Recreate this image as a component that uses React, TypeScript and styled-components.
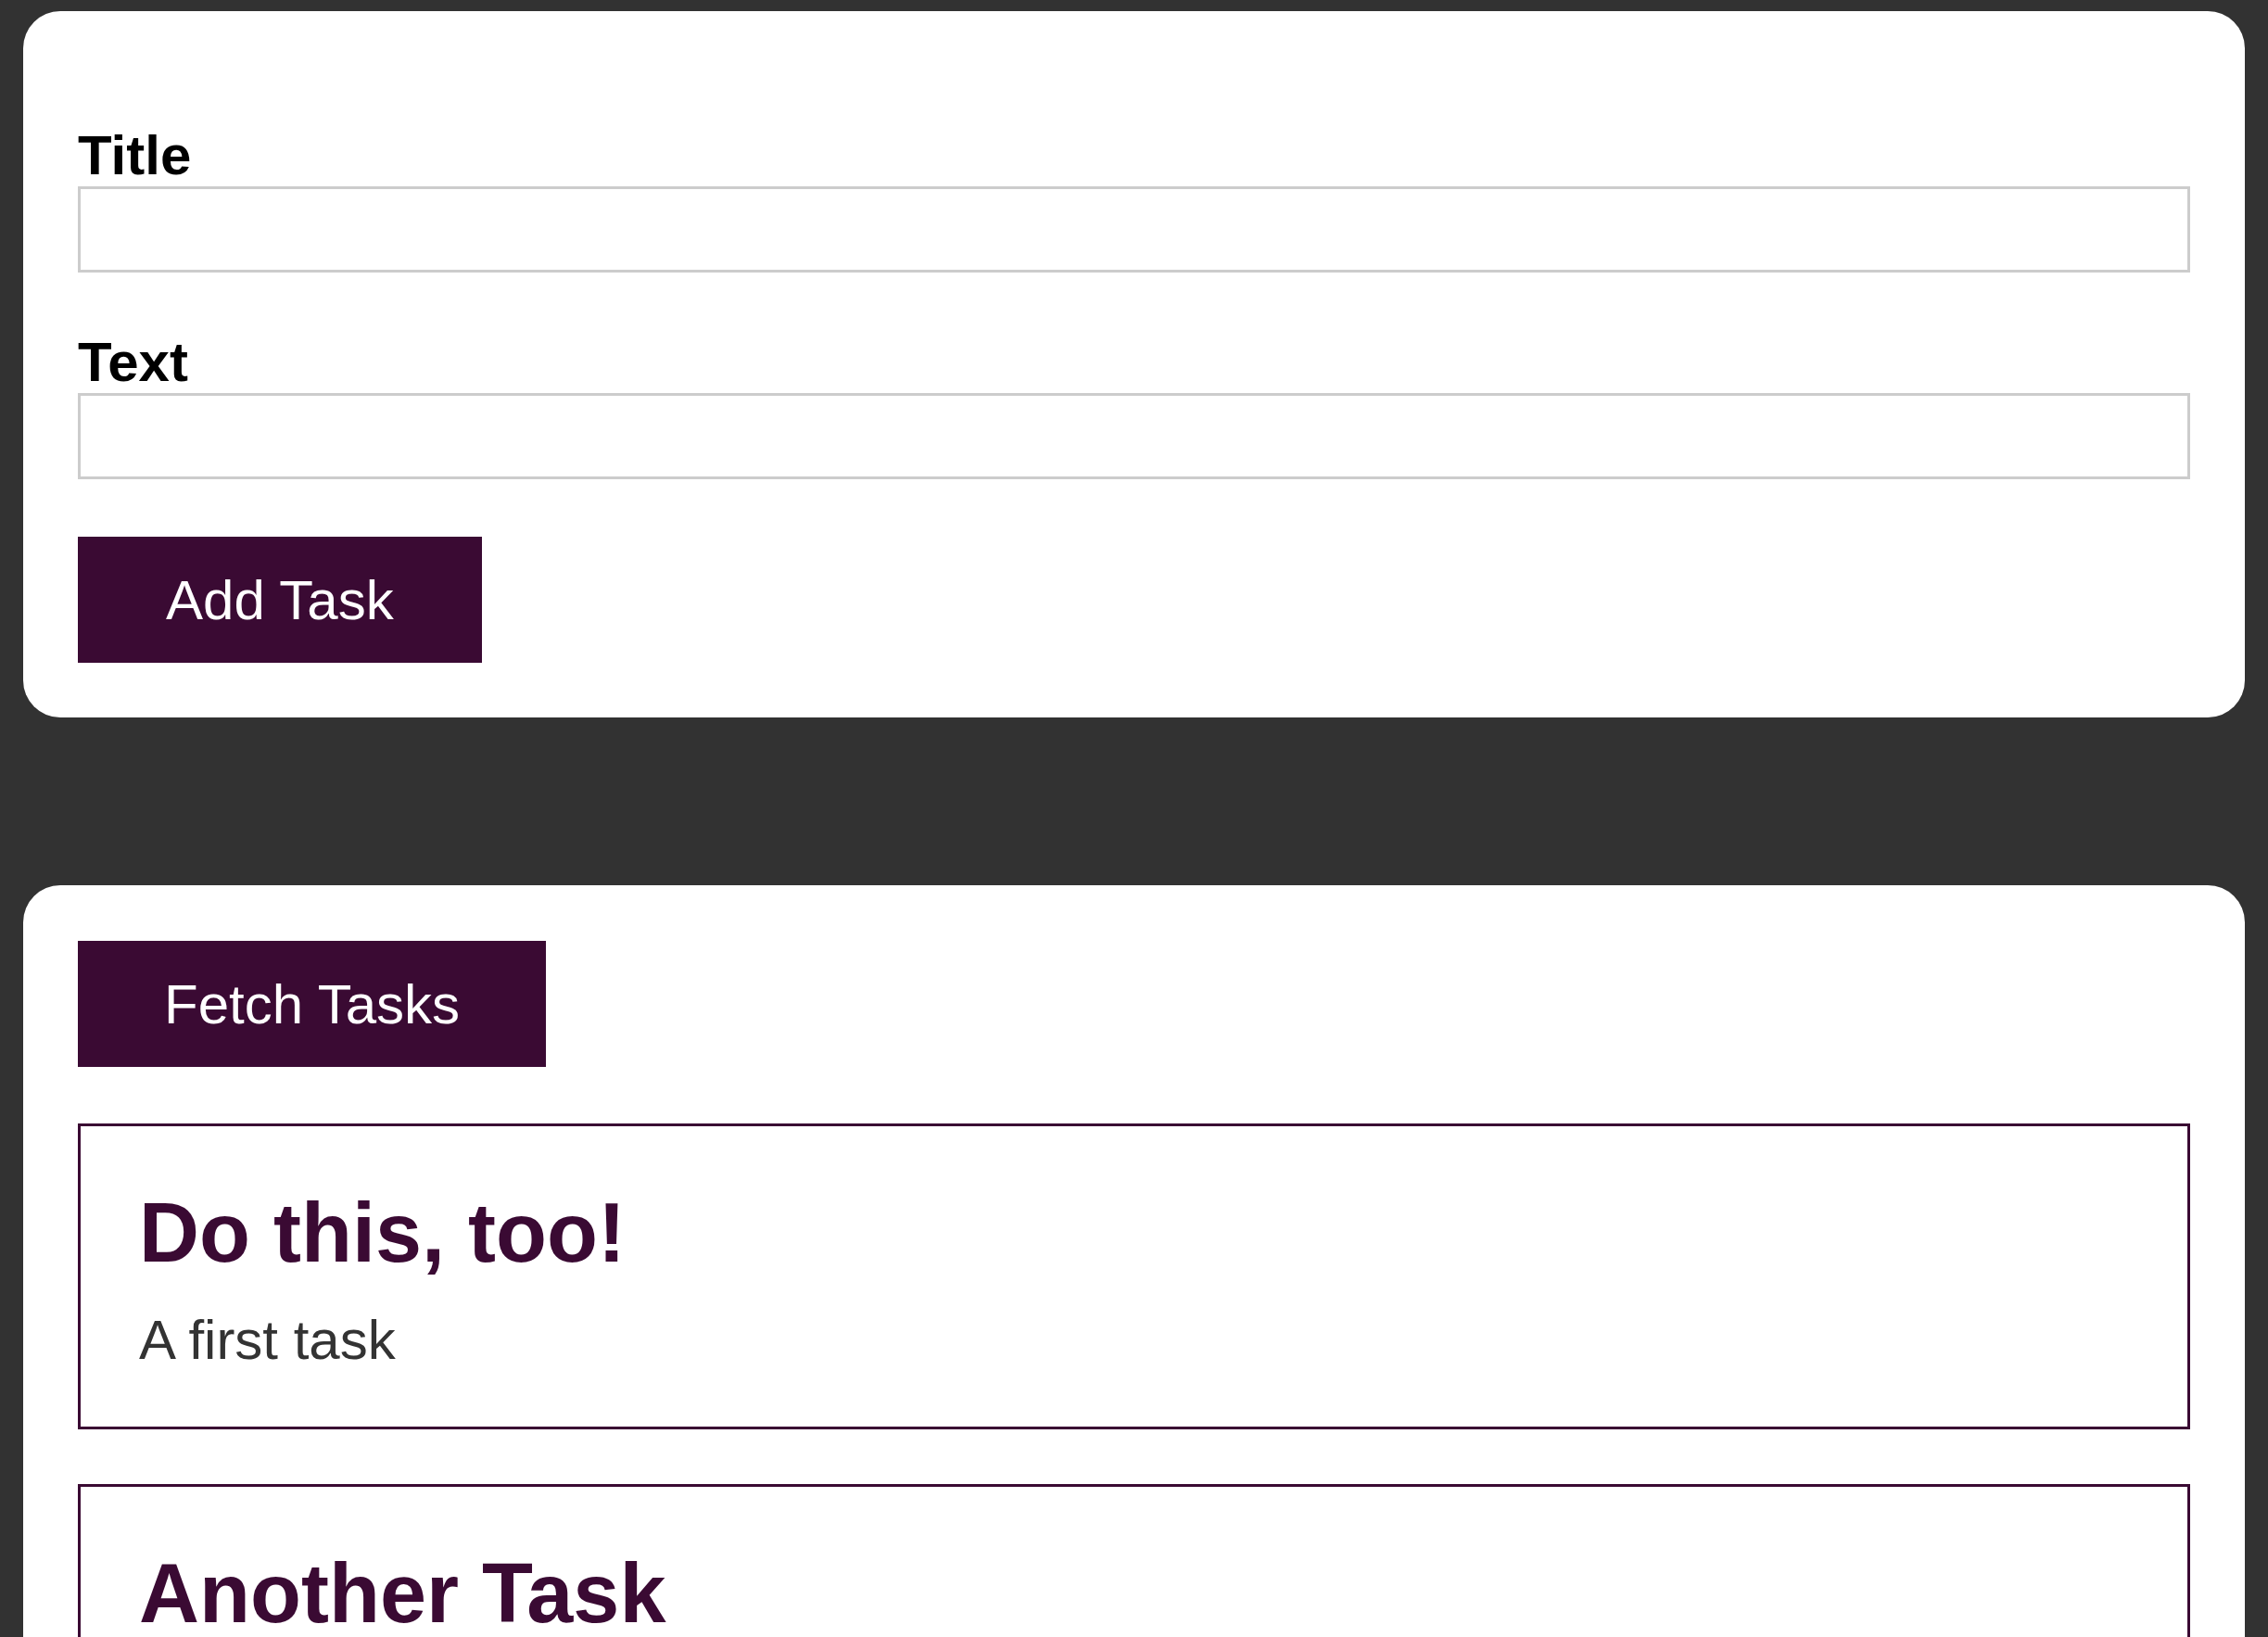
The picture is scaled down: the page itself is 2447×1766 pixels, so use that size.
import React from "react";
import styled, { createGlobalStyle } from "styled-components";

const GlobalStyle = createGlobalStyle`
  html, body {
    margin: 0;
    padding: 0;
    background: #323232;
  }
  * { box-sizing: border-box; }
  body {
    font-family: "Liberation Sans", Arial, Helvetica, sans-serif;
  }
`;

const Page = styled.main`
  display: flex;
  flex-direction: column;
  gap: 181px;
  padding: 12px 25px 60px;
`;

const Card = styled.section`
  background: #ffffff;
  border-radius: 40px;
  padding: 60px 59px 59px;
  display: flex;
  flex-direction: column;
`;

const Form = styled.form`
  display: flex;
  flex-direction: column;
  margin: 0;
`;

const Control = styled.div<{ $first?: boolean }>`
  display: flex;
  flex-direction: column;
  margin-top: ${(p) => (p.$first ? "63px" : "64px")};
`;

const Label = styled.label`
  font-size: 60px;
  font-weight: 700;
  color: #000;
  line-height: 66px;
`;

const Input = styled.input`
  height: 93px;
  width: 100%;
  border: 3px solid #cccccc;
  font-size: 50px;
  padding: 0 16px;
  outline: none;
  font-family: inherit;
`;

const Button = styled.button<{ $mt?: number; $pad?: number }>`
  align-self: flex-start;
  height: 136px;
  padding: 0 ${(p) => p.$pad ?? 94}px;
  background: #3a0a33;
  color: #ffffff;
  border: 1px solid #3a0a33;
  font-family: inherit;
  font-size: 60px;
  font-weight: 400;
  cursor: pointer;
  margin-top: ${(p) => p.$mt ?? 0}px;
`;

const TaskList = styled.ul`
  list-style: none;
  margin: 61px 0 0;
  padding: 0;
  display: flex;
  flex-direction: column;
  gap: 59px;
`;

const TaskItem = styled.li`
  border: 3px solid #3a0a33;
  padding: 64px 63px 60px;
`;

const TaskTitle = styled.h2`
  margin: 0 0 30px;
  font-size: 90px;
  font-weight: 700;
  color: #3a0a33;
  line-height: 1.149;
`;

const TaskText = styled.p`
  margin: 0;
  font-size: 60px;
  color: #333333;
  line-height: 67px;
`;

const tasks = [
  { id: 1, title: "Do this, too!", text: "A first task" },
  { id: 2, title: "Another Task", text: "A second task" },
];

export default function App() {
  return (
    <>
      <GlobalStyle />
      <Page>
        <Card>
          <Form onSubmit={(e) => e.preventDefault()}>
            <Control $first>
              <Label htmlFor="title">Title</Label>
              <Input id="title" type="text" />
            </Control>
            <Control>
              <Label htmlFor="text">Text</Label>
              <Input id="text" type="text" />
            </Control>
            <Button type="submit" $mt={62}>
              Add Task
            </Button>
          </Form>
        </Card>
        <Card>
          <Button type="button" $pad={92}>
            Fetch Tasks
          </Button>
          <TaskList>
            {tasks.map((t) => (
              <TaskItem key={t.id}>
                <TaskTitle>{t.title}</TaskTitle>
                <TaskText>{t.text}</TaskText>
              </TaskItem>
            ))}
          </TaskList>
        </Card>
      </Page>
    </>
  );
}
